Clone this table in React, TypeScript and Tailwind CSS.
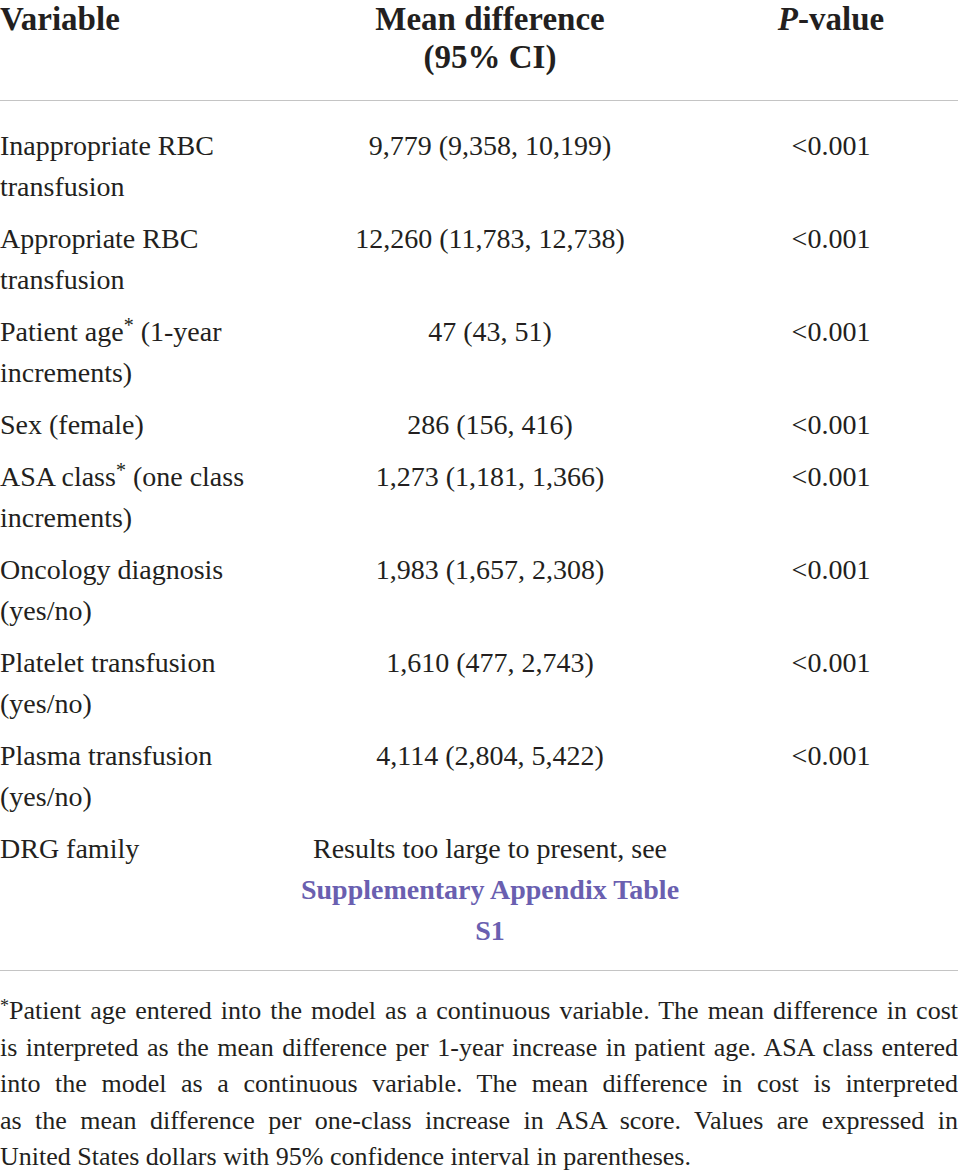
const rows: { label: React.ReactNode; diff: React.ReactNode; p: string }[] = [
  { label: <>Inappropriate RBC<br />transfusion</>, diff: "9,779 (9,358, 10,199)", p: "<0.001" },
  { label: <>Appropriate RBC<br />transfusion</>, diff: "12,260 (11,783, 12,738)", p: "<0.001" },
  { label: <>Patient age<sup className="text-[20px] top-[-0.45em]">*</sup> (1-year<br />increments)</>, diff: "47 (43, 51)", p: "<0.001" },
  { label: "Sex (female)", diff: "286 (156, 416)", p: "<0.001" },
  { label: <>ASA class<sup className="text-[20px] top-[-0.45em]">*</sup> (one class<br />increments)</>, diff: "1,273 (1,181, 1,366)", p: "<0.001" },
  { label: <>Oncology diagnosis<br />(yes/no)</>, diff: "1,983 (1,657, 2,308)", p: "<0.001" },
  { label: <>Platelet transfusion<br />(yes/no)</>, diff: "1,610 (477, 2,743)", p: "<0.001" },
  { label: <>Plasma transfusion<br />(yes/no)</>, diff: "4,114 (2,804, 5,422)", p: "<0.001" },
];

const footnote = [
  <><sup className="text-[18px] top-[-0.4em]">*</sup>Patient age entered into the model as a continuous variable. The mean difference in cost</>,
  <>is interpreted as the mean difference per 1-year increase in patient age. ASA class entered</>,
  <>into the model as a continuous variable. The mean difference in cost is interpreted</>,
  <>as the mean difference per one-class increase in ASA score. Values are expressed in</>,
];

export default function App() {
  return (
    <div className="w-[958px] bg-white text-[#231f20]" style={{ fontFamily: '"Liberation Serif", "DejaVu Serif", serif' }}>
      {/* Header */}
      <div className="grid grid-cols-[276px_428px_254px] border-b border-[#c4c4c4] pb-[24px] text-[33px] leading-[38px] font-bold">
        <div>Variable</div>
        <div className="text-center">Mean difference<br />(95% CI)</div>
        <div className="text-center"><i>P</i>-value</div>
      </div>

      {/* Rows */}
      <div className="border-b border-[#c4c4c4] pt-[18px] pb-[14px] text-[28px] leading-[41px]">
        {rows.map((r, i) => (
          <div key={i} className="grid grid-cols-[276px_428px_254px] py-[5.5px]">
            <div className="whitespace-nowrap">{r.label}</div>
            <div className="text-center">{r.diff}</div>
            <div className="text-center">{r.p}</div>
          </div>
        ))}
        <div className="grid grid-cols-[276px_428px_254px] py-[5.5px]">
          <div>DRG family</div>
          <div className="text-center whitespace-nowrap">
            Results too large to present, see<br />
            <span className="font-bold text-[#6a5fb0]">Supplementary Appendix Table<br />S1</span>
          </div>
          <div />
        </div>
      </div>

      {/* Footnote */}
      <div className="pt-[22px] text-[26px] leading-[36.5px]">
        {footnote.map((line, i) => (
          <div key={i} className="whitespace-nowrap text-justify [text-align-last:justify]">{line}</div>
        ))}
        <div>United States dollars with 95% confidence interval in parentheses.</div>
      </div>
    </div>
  );
}
